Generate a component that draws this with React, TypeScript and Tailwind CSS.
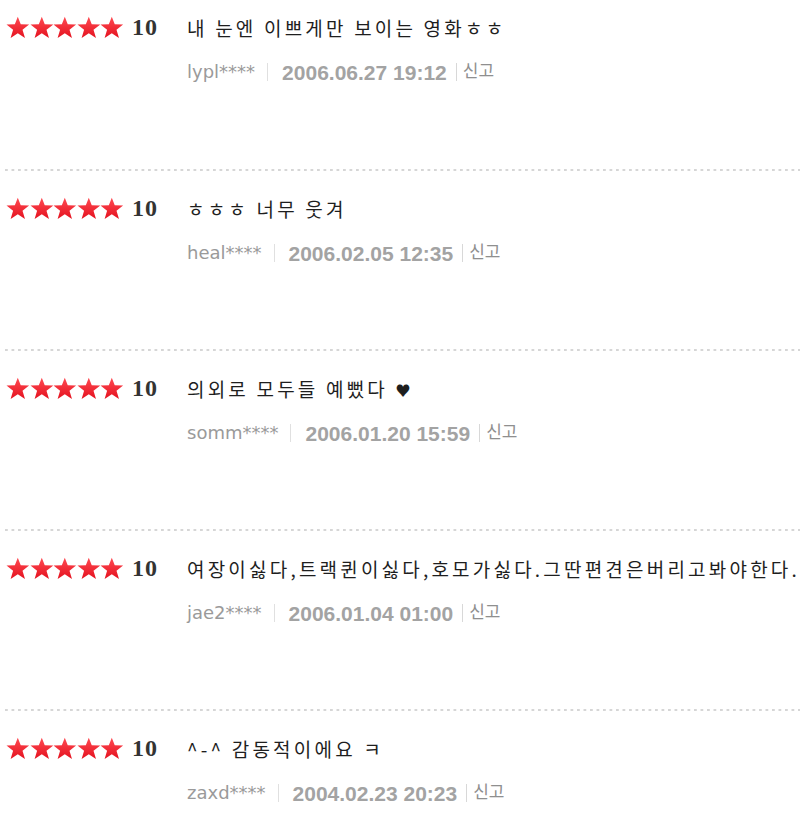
import React from 'react';

interface Review {
  score: number;
  text: string;
  user: string;
  date: string;
}

const reviews: Review[] = [
  { score: 10, text: '내 눈엔 이쁘게만 보이는 영화ㅎㅎ', user: 'lypl****', date: '2006.06.27 19:12' },
  { score: 10, text: 'ㅎㅎㅎ 너무 웃겨', user: 'heal****', date: '2006.02.05 12:35' },
  { score: 10, text: '의외로 모두들 예뻤다 ♥', user: 'somm****', date: '2006.01.20 15:59' },
  { score: 10, text: '여장이싫다,트랙퀸이싫다,호모가싫다.그딴편견은버리고봐야한다.', user: 'jae2****', date: '2006.01.04 01:00' },
  { score: 10, text: '^-^ 감동적이에요 ㅋ', user: 'zaxd****', date: '2004.02.23 20:23' },
];

function Star() {
  return (
    <svg width="23.6" height="23" viewBox="0 0 24 23" className="shrink-0">
      <defs>
        <linearGradient id="starFill" x1="0" y1="0" x2="0" y2="1">
          <stop offset="0" stopColor="#ff4a52" />
          <stop offset="1" stopColor="#e4121f" />
        </linearGradient>
      </defs>
      <polygon
        points="12,0.5 15,8.3 23.5,8.5 16.8,13.8 19.3,22.2 12,17.3 4.7,22.2 7.2,13.8 0.5,8.5 9,8.3"
        fill="url(#starFill)"
      />
    </svg>
  );
}

// heart glyph in the old page is small and bold
function CommentText({ text }: { text: string }) {
  const parts = text.split('♥');
  return (
    <>
      {parts.map((p, i) => (
        <React.Fragment key={i}>
          {p}
          {i < parts.length - 1 && <span className="text-[15px] align-[1px]">♥</span>}
        </React.Fragment>
      ))}
    </>
  );
}

function ReviewItem({ review, first }: { review: Review; first: boolean }) {
  return (
    <div className={first ? 'h-[169px] pt-[15px]' : 'h-[178px] pt-[25px]'}>
      <div className="flex items-center h-[24px]">
        <div className="w-[187px] shrink-0 flex items-center pl-[6px]">
          <div className="flex">
            {Array.from({ length: 5 }).map((_, i) => (
              <Star key={i} />
            ))}
          </div>
          <span className="ml-[8px] font-['Liberation_Serif',serif] font-bold text-[24px] leading-none tracking-[1px] text-[#333]">
            {review.score}
          </span>
        </div>
        <p className="whitespace-nowrap font-['Noto_Sans_CJK_KR',sans-serif] text-[19px] leading-none tracking-[3.2px] text-[#1e1e1e]">
          <CommentText text={review.text} />
        </p>
      </div>
      <div className="flex items-center h-[24px] mt-[21px] pl-[187px] whitespace-nowrap">
        <span className="font-['DejaVu_Sans',sans-serif] text-[18px] text-[#9a9a9a] leading-none">{review.user}</span>
        <span className="ml-[12px] mr-[14px] w-px h-[18px] bg-[#e0e0e0]"></span>
        <span className="font-['Liberation_Sans',sans-serif] font-bold text-[21px] text-[#a3a3a3] leading-none">{review.date}</span>
        <span className="ml-[9px] mr-[6px] w-px h-[18px] bg-[#d8d8d8]"></span>
        <span className="font-['Noto_Sans_CJK_KR',sans-serif] text-[17px] text-[#8f8f8f] leading-none -mt-[6px]">신고</span>
      </div>
    </div>
  );
}

export default function App() {
  return (
    <div className="w-[800px] h-[830px] bg-white overflow-hidden">
      {reviews.map((review, i) => (
        <div key={i}>
          {i > 0 && (
            <div className="ml-[5px] h-[2px] bg-[linear-gradient(to_right,#d6d6d6_3px,transparent_3px)] bg-[length:6.5px_2px]"></div>
          )}
          <ReviewItem review={review} first={i === 0} />
        </div>
      ))}
    </div>
  );
}
